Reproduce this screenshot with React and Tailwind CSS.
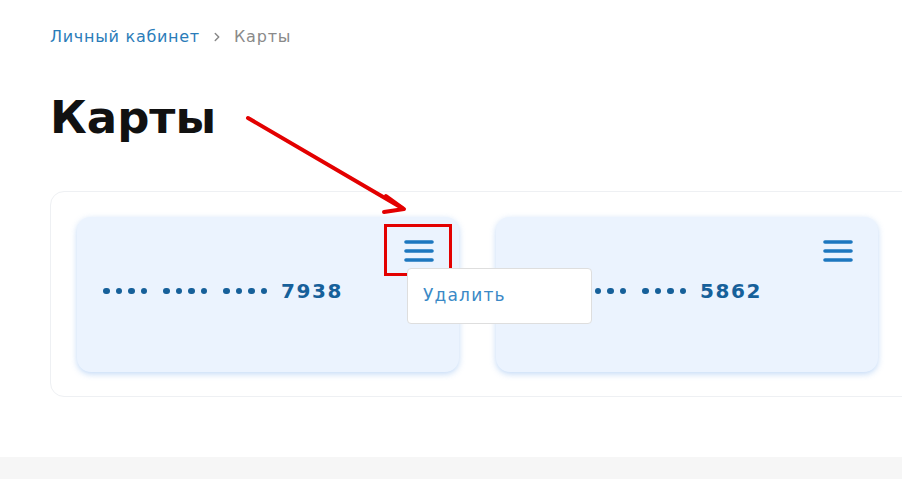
import { ChevronRight } from "lucide-react";

function MenuIcon() {
  return (
    <svg width="30" height="22" viewBox="0 0 30 22" fill="none">
      <path d="M2 2h26M2 11h26M2 20h26" stroke="#1d77bf" strokeWidth="3.6" strokeLinecap="round" />
    </svg>
  );
}

function Dots() {
  return (
    <div className="flex gap-[6px]">
      {[0, 1, 2, 3].map((i) => (
        <span key={i} className="w-[6.5px] h-[6.5px] rounded-full bg-[#16609a]" />
      ))}
    </div>
  );
}

function Card({ last, open }) {
  return (
    <div className="relative w-[382px] h-[155px] shrink-0 rounded-[14px] bg-[#ebf3fe] shadow-[0_2px_6px_rgba(120,170,235,0.45)]">
      <div className="absolute top-[23px] right-[25px]">
        <MenuIcon />
      </div>
      <div className="pl-[26px] pt-[61px] flex items-center gap-[16px] text-[#16609a]">
        <Dots />
        <Dots />
        <Dots />
        <span className="text-[20px] leading-[26px] font-bold tracking-[0.08em] -ml-[2px]">{last}</span>
      </div>
      {open && (
        <>
          <div className="absolute left-[307px] top-[7px] w-[68px] h-[52px] border-[3.5px] border-[#e30000]" />
          <div className="absolute z-10 left-[330px] top-[51px] w-[185px] h-[56px] bg-white border border-[#dedede] rounded-[4px] flex items-center pl-[15px] text-[17px] tracking-[0.07em] text-[#3a89c6]">
            Удалить
          </div>
        </>
      )}
    </div>
  );
}

export default function App() {
  return (
    <div className="relative w-[902px] h-[479px] overflow-hidden bg-white font-['DejaVu_Sans',sans-serif]">
      <div className="h-[457px] pl-[50px] pt-[26px]">
        <nav className="flex items-center text-[16px] leading-[22px]">
          <span className="text-[#2a7cb9] tracking-[0.045em]">Личный кабинет</span>
          <ChevronRight className="mx-[10px] text-[#888]" size={14} strokeWidth={2.5} />
          <span className="text-[#8a8a8a] tracking-[0.05em]">Карты</span>
        </nav>
        <h1 className="mt-[42px] text-[45px] leading-[56px] font-bold text-[#111]">Карты</h1>
        <div className="mt-[45px] w-[900px] h-[206px] rounded-[14px] border border-[#eef0f3] px-[26px] pt-[25px] flex gap-[37px]">
          <Card last="7938" open />
          <Card last="5862" />
        </div>
      </div>
      <div className="h-[22px] bg-[#f6f6f6]" />
      <svg className="absolute left-0 top-0 pointer-events-none" width="902" height="479">
        <path d="M248 118L402 208" stroke="#e30000" strokeWidth="4" strokeLinecap="round" />
        <path d="M386 196L404 209L384 212" stroke="#e30000" strokeWidth="4" strokeLinecap="round" strokeLinejoin="round" fill="none" />
      </svg>
    </div>
  );
}
